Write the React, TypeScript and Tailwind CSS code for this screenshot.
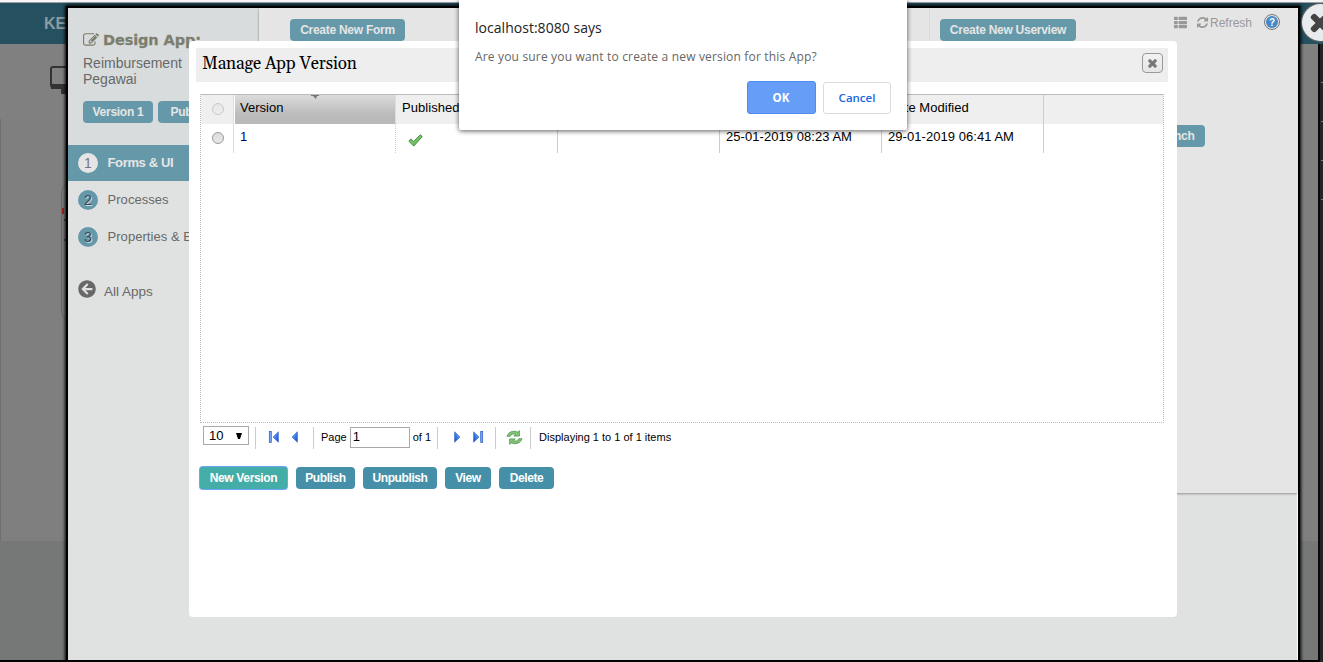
import type { ReactNode } from 'react';
import { FaArrowCircleLeft, FaThList, FaTimes } from 'react-icons/fa';

const EDIT_PATH =
  'M888 1184l116-116-152-152-116 116v56h96v96h56zm440-720q-16-16-33 1l-350 350q-17 17-1 33t33-1l350-350q17-17 1-33zm80 594v190q0 119-84.5 203.5t-203.5 84.5h-832q-119 0-203.5-84.5t-84.5-203.5v-832q0-119 84.5-203.5t203.5-84.5h832q63 0 117 25 15 7 18 23 3 17-9 29l-49 49q-14 14-32 8-23-6-45-6h-832q-66 0-113 47t-47 113v832q0 66 47 113t113 47h832q66 0 113-47t47-113v-126q0-13 9-22l64-64q15-15 35-7t20 29zm-96-738l288 288-672 672h-288v-288zm444 132l-92 92-288-288 92-92q28-28 68-28t68 28l152 152q28 28 28 68t-28 68z';
const REFRESH_PATH =
  'M1639 1056q0 5-1 7-64 268-268 434.5t-478 166.5q-146 0-282.5-55t-243.5-157l-129 129q-19 19-45 19t-45-19-19-45v-448q0-26 19-45t45-19h448q26 0 45 19t19 45-19 45l-137 137q71 66 161 102t187 36q134 0 250-65t186-179q11-17 53-117 8-23 30-23h192q13 0 22.5 9.5t9.5 22.5zm25-800v448q0 26-19 45t-45 19h-448q-26 0-45-19t-19-45 19-45l138-138q-148-137-349-137-134 0-250 65t-186 179q-11 17-53 117-8 23-30 23h-199q-13 0-22.5-9.5t-9.5-22.5v-7q65-268 270-434.5t480-166.5q146 0 284 55.5t245 156.5l130-129q19-19 45-19t45 19 19 45z';

function MutedButton({ width, children }: { width: string; children: ReactNode }) {
  return (
    <button className={`block h-[22px] shrink-0 rounded-[4px] bg-[#6599a9] text-[12px] font-bold leading-[22px] tracking-[-0.27px] whitespace-nowrap text-[#e5e5e5] ${width}`}>
      {children}
    </button>
  );
}

function ActionButton({ width, children }: { width: string; children: ReactNode }) {
  return (
    <button className={`h-[22px] rounded-[4px] bg-[#4590a8] text-[12px] font-bold leading-[22px] tracking-[-0.4px] text-white ${width}`}>
      {children}
    </button>
  );
}

function NavItem({ n, label, active = false }: { n: number; label: string; active?: boolean }) {
  return (
    <div className={`mb-px flex h-9 items-center pl-2.5 ${active ? 'bg-[#6599a9] text-[#e5e5e5]' : 'text-[#686868]'}`}>
      <span
        className={`flex size-5 items-center justify-center rounded-full text-[14px] ${
          active ? 'bg-[#e5e5e5] text-[#777]' : 'bg-[#6599a9] text-[#40474b] [text-shadow:1px_1px_0_#c9dde3]'
        }`}
      >
        {n}
      </span>
      <span className={`ml-[9.5px] text-[13px] whitespace-nowrap ${active ? 'font-bold tracking-[-0.35px]' : 'tracking-[0.05px]'}`}>{label}</span>
    </div>
  );
}

function Radio({ faded = false }: { faded?: boolean }) {
  return (
    <span
      className={`mb-[2px] ml-[2px] size-3 rounded-full border bg-linear-to-b ${
        faded ? 'border-[#c8c8c8] from-[#e6e6e6] to-[#eeeeee]' : 'border-[#999] from-[#dcdcdc] to-[#e8e8e8]'
      }`}
    />
  );
}

function Arrow({ dir, bar = false }: { dir: 'left' | 'right'; bar?: boolean }) {
  return (
    <svg width="12" height="12" viewBox="0 0 12 12" className={dir === 'left' ? '' : '-scale-x-100'}>
      <defs>
        <linearGradient id={`blue-${dir}-${bar}`} x1="0" y1="0" x2="1" y2="1">
          <stop offset="0" stopColor="#a5ccff" />
          <stop offset="0.5" stopColor="#3d80ee" />
          <stop offset="1" stopColor="#1747b8" />
        </linearGradient>
      </defs>
      {bar && <rect x="1.3" y="0.5" width="2" height="11" fill="#7babf5" stroke="#2357bd" strokeWidth="0.7" />}
      <path d={bar ? 'M10.4 .8V11.2L5 6z' : 'M8.4 .8V11.2L3 6z'} fill={`url(#blue-${dir}-${bar})`} stroke="#285cc8" strokeWidth="0.6" />
    </svg>
  );
}

function Sep() {
  return <span className="h-[22px] w-px bg-[#ccc]" />;
}

function BackPage() {
  return (
    <div className="flex h-full flex-col">
      <div className="h-[3px] border-b border-[#a0a0a4] bg-[#f6f6f8]" />
      <header className="flex h-[41px] items-center bg-[#24505f] pl-11 text-[16px] font-bold text-[#8b9ba1]">KECAK</header>
      <div className="h-[75px] bg-[#808080] pt-[22px] pl-[50px]">
        <svg width="30" height="28" viewBox="0 0 30 28">
          <rect x="1" y="1" width="28" height="20" rx="2" fill="none" stroke="#333" strokeWidth="2" />
          <path d="M1 18h28v5H1zM11 23h8v5h-8z" fill="#333" />
        </svg>
      </div>
      <div className="flex h-[422px] border-l border-[#6f6f6f] bg-[#7f7f7f] pt-[62px] pl-[60px]">
        <div className="flex h-[142px] w-[200px] flex-col rounded-[12px] border border-[#686868] pt-[26px]">
          <span className="h-[6px] w-[2px] bg-[#9a2a20]" />
          <span className="mt-[5px] ml-[2px] h-[2px] w-3 bg-[#444]" />
          <span className="mt-[18px] ml-[2px] h-[2px] w-3 bg-[#444]" />
        </div>
      </div>
      <div className="h-[119px] bg-[#757876]" />
      <footer className="flex h-[2px] bg-black pl-[245px]">
        <span className="h-full w-[48px] bg-[#333]" />
      </footer>
    </div>
  );
}

function DesignWindow() {
  return (
    <div className="absolute top-[8px] left-[68px] flex h-[652px] w-[1230px] border-r border-white bg-[#e0e2e1] shadow-[0_0_0_2px_#000,0_0_3px_3px_#000]">
      <aside className="w-[191px] shrink-0">
        <div className="h-[137px] border-r border-[#cfd3d3] bg-[#d8dcdd] pt-[22px] pl-[15px] text-[#686868]">
          <div className="flex h-[20px] items-center gap-[3px] whitespace-nowrap text-[#7c7e6d]">
            <svg width="16" height="16" viewBox="0 0 1792 1792" fill="currentColor">
              <path d={EDIT_PATH} />
            </svg>
            <h1 className="mt-[2px] ml-[1px] font-['DejaVu_Sans',sans-serif] text-[14.5px] font-bold tracking-[-0.1px] [-webkit-text-stroke:0.3px_#7c7e6d]">Design App:</h1>
          </div>
          <p className="mt-[5px] w-[110px] text-[14px] leading-4">Reimbursement Pegawai</p>
          <div className="mt-[14px] flex gap-[5px] overflow-hidden">
            <MutedButton width="w-[70px]">Version 1</MutedButton>
            <MutedButton width="w-[80px]">Published</MutedButton>
          </div>
        </div>
        <nav>
          <NavItem n={1} label="Forms & UI" active />
          <NavItem n={2} label="Processes" />
          <NavItem n={3} label="Properties & Export" />
        </nav>
        <div className="mt-[22px] flex items-center pl-[10px] text-[#686868]">
          <FaArrowCircleLeft className="mb-[1px]" size={18} />
          <span className="mt-[5px] ml-[8px] text-[13.5px]">All Apps</span>
        </div>
      </aside>
      <main className="flex h-[485px] flex-1 bg-[#e5e5e5] shadow-[0_1px_2px_rgba(0,0,0,0.35)]">
        <section className="w-[671px] border-r border-[#dadada] pt-[11px] pl-[31px]">
          <MutedButton width="w-[115px]">Create New Form</MutedButton>
        </section>
        <section className="flex-1 pt-[11px] pl-[10px]">
          <MutedButton width="w-[136px]">Create New Userview</MutedButton>
          <div className="mt-[84px] pl-[203px]">
            <MutedButton width="w-[62px]">Launch</MutedButton>
          </div>
        </section>
        <div className="absolute top-[6px] right-[17px] flex h-4 items-center text-[12px] text-[#999]">
          <FaThList size={13} />
          <svg className="ml-[9px]" width="13" height="13" viewBox="0 0 1792 1792" fill="currentColor">
            <path d={REFRESH_PATH} />
          </svg>
          <span className="mt-[2px] ml-[1px]">Refresh</span>
          <span className="ml-3 flex size-4 items-center justify-center rounded-full border border-[#777] bg-[#e5e5e5]">
            <span className="flex size-3 items-center justify-center rounded-full bg-[#4389c8] text-[10px] font-bold text-white">?</span>
          </span>
        </div>
      </main>
    </div>
  );
}

const CELL = 'w-[162px] border-r border-[#ccc] pl-[6px] text-[13px] tracking-[0.05px]';

function VersionModal() {
  return (
    <div className="absolute top-[41px] left-[189px] flex h-[576px] w-[988px] flex-col rounded-[4px] bg-white pt-[7px] pr-[9px] pl-[7px]">
      <div className="flex h-[34px] items-center justify-between bg-[#eee] pr-[5px] pl-[6px]">
        <h2 className="font-['Gelasio','Georgia','Liberation_Serif',serif] text-[17px] tracking-[-0.12px] text-black">Manage App Version</h2>
        <button className="mt-[-4px] flex h-5 w-[21px] items-center justify-center rounded-[4px] border border-[#999] bg-linear-to-b from-[#f2f2f2] to-[#e6e6e6] text-[#777]">
          <FaTimes size={11} strokeWidth={50} stroke="currentColor" />
        </button>
      </div>
      <div className="mt-3 ml-1 flex h-[329px] w-[964px] flex-col border border-dotted border-[#bbb] border-t-[#bbb] text-black [border-top-style:solid]">
        <div className="flex h-[29px] shrink-0 bg-[#efefef] leading-[26px]">
          <div className="flex w-[33px] items-center justify-center border-r border-[#ddd]">
            <Radio faded />
          </div>
          <div className="flex w-[162px] justify-between border-r border-l border-white border-r-[#ddd] bg-linear-to-b from-[#dcdcdc] via-[#bcbcbc] via-65% to-[#b8b8b8] pl-[5px] text-[13px]">
            <span>Version</span>
            <svg className="mr-[76px]" width="8" height="4" viewBox="0 0 8 4">
              <path d="M0 0h8v1H6L5 4 2 1H0z" fill="#777" />
            </svg>
          </div>
          <div className={CELL}>Published</div>
          <div className={CELL} />
          <div className={CELL} />
          <div className={CELL}>Date Modified</div>
        </div>
        <div className="flex h-[29px] leading-[26px] whitespace-nowrap">
          <div className="flex w-[33px] items-center justify-center border-r border-[#ddd]">
            <Radio />
          </div>
          <div className={`${CELL} border-dotted text-[#000080]`}>1</div>
          <div className={CELL}>
            <svg className="mt-[10px] ml-[6px]" width="15" height="13" viewBox="0 0 15 13">
              <path d="M.8 7.1 3 4.9l2.6 2.6L12.3.8l2 1.8-8.5 9.5z" fill="#66b55d" stroke="#4a924a" />
              <path d="M2.2 6.9 5.5 9.5l7.6-7.4" fill="none" stroke="#8fcc80" />
            </svg>
          </div>
          <div className={CELL} />
          <div className={CELL}>25-01-2019 08:23 AM</div>
          <div className={CELL}>29-01-2019 06:41 AM</div>
        </div>
      </div>
      <div className="ml-[7px] flex h-[29px] items-center text-[11px] text-black">
        <span className="mt-[-4px] flex h-[19px] w-[46px] items-center justify-between border border-[#aaa] pr-[6px] pl-[5px] text-[13px]">
          10
          <svg width="6" height="6" viewBox="0 0 6 6">
            <path d="M0 0h6L4 6H2z" fill="#000" />
          </svg>
        </span>
        <span className="ml-[6px] flex items-center">
          <Sep />
          <span className="mb-[2px] ml-[12px] flex gap-[9px]">
            <Arrow dir="left" bar />
            <Arrow dir="left" />
          </span>
        </span>
        <span className="ml-[12px] flex items-center">
          <Sep />
          <span className="ml-[7px]">Page</span>
          <span className="mb-[1px] ml-[3px] flex h-[21px] w-[60px] items-center border border-[#aaa] pl-[2px] text-[13px]">1</span>
          <span className="ml-[3px] whitespace-nowrap">of 1</span>
        </span>
        <span className="ml-[6px] flex items-center">
          <Sep />
          <span className="mb-[2px] ml-[13px] flex gap-[9px]">
            <Arrow dir="right" />
            <Arrow dir="right" bar />
          </span>
        </span>
        <span className="ml-[11px] flex items-center">
          <Sep />
          <svg className="ml-[10px]" width="17" height="15" viewBox="0 0 17 15">
            <g fill="#83c377" stroke="#4f984f" strokeWidth="0.8" strokeLinejoin="round">
              <path d="M1 6.3C2 2.4 7-.1 11.6 2.1L13.4.7v5.4H7.8l2-1.7C7.3 3.3 4.8 4.2 4.2 6.3z" />
              <path d="M16 8.7c-1 3.9-6 6.4-10.6 4.2l-1.8 1.4V8.9h5.6l-2 1.7c2.5 1.1 5 .2 5.6-1.9z" />
            </g>
          </svg>
        </span>
        <span className="ml-[7px] flex items-center">
          <Sep />
          <span className="ml-[8px] whitespace-nowrap">Displaying 1 to 1 of 1 items</span>
        </span>
      </div>
      <div className="mt-[15px] ml-1 flex gap-2">
        <button className="h-[22px] w-[87px] rounded-[3px] bg-[#45ada8] text-[12px] font-bold leading-[22px] tracking-[-0.35px] text-white ring-1 ring-[#6ea6f5]">New Version</button>
        <span className="flex gap-2 pl-[1px]">
          <ActionButton width="w-[59px]">Publish</ActionButton>
          <ActionButton width="w-[74px]">Unpublish</ActionButton>
          <ActionButton width="w-[46px]">View</ActionButton>
          <ActionButton width="w-[55px]">Delete</ActionButton>
        </span>
      </div>
    </div>
  );
}

function ConfirmDialog() {
  return (
    <div className="absolute top-0 left-[459px] flex h-[130px] w-[448px] flex-col rounded-b-[2px] bg-white px-4 pt-[18px] font-['Open_Sans',sans-serif] shadow-[0_1px_5px_rgba(0,0,0,0.65)]">
      <p className="text-[14px] leading-5 tracking-[0.03px] text-[#222]">localhost:8080 says</p>
      <p className="mt-[11px] text-[12px] leading-4 tracking-[0.17px] text-[#666]">Are you sure you want to create a new version for this App?</p>
      <div className="mt-[16px] flex items-center justify-end gap-[7.5px] text-[11.5px]">
        <button className="h-[33px] w-[69px] rounded-[3px] border border-[#4d8bf0] bg-[#669df6] font-bold text-white">OK</button>
        <button className="h-[32px] w-[68px] rounded-[3px] border border-[#dadce0] font-semibold text-[#1a66e0]">Cancel</button>
      </div>
    </div>
  );
}

export default function App() {
  return (
    <div className="relative h-[662px] w-[1323px] overflow-hidden font-['Liberation_Sans',Arial,sans-serif]">
      <BackPage />
      <div className="absolute top-[44px] right-0 h-[618px] w-[5px] border-l-2 border-[#080808] bg-[#252525]">
        <div className="mt-[38px] ml-auto h-px w-[2px] bg-[#777]" />
        <div className="mt-[38px] ml-auto h-px w-[2px] bg-[#777]" />
        <div className="mt-[38px] ml-auto h-px w-[2px] bg-[#777]" />
        <div className="mt-[38px] ml-auto h-px w-[2px] bg-[#777]" />
      </div>
      <DesignWindow />
      <div className="absolute top-[4px] left-[1302px] flex size-[37px] items-center justify-center rounded-full bg-[#e9ebee] text-[#444] shadow-[0_0_1px_1px_#666]">
        <FaTimes className="shrink-0 translate-x-[-1px]" size={24} stroke="currentColor" strokeWidth={40} />
      </div>
      <VersionModal />
      <ConfirmDialog />
    </div>
  );
}
